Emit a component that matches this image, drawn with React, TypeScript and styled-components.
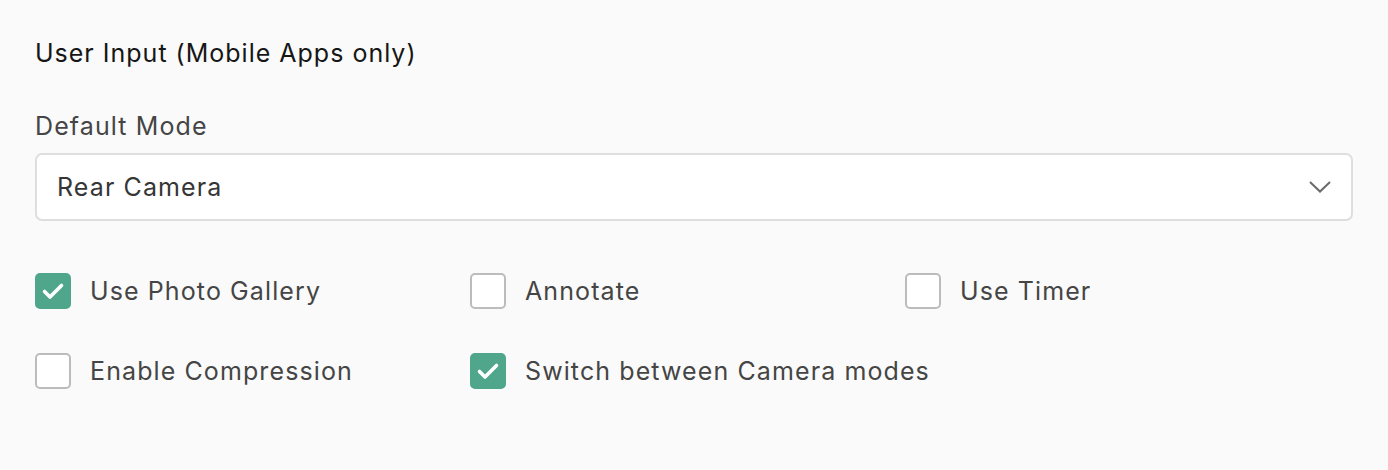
import React, { useState } from "react";
import styled, { createGlobalStyle } from "styled-components";

const GlobalStyle = createGlobalStyle`
  html, body {
    margin: 0;
    padding: 0;
    background: #fafafa;
  }
  body {
    font-family: Inter, "Noto Sans", "Liberation Sans", sans-serif;
    font-size: 25px;
    letter-spacing: 1.1px;
  }
`;

const Panel = styled.div`
  padding: 37px 35px 0 35px;
  display: flex;
  flex-direction: column;
  width: 1318px;
`;

const Title = styled.h2`
  margin: 0;
  font-size: 25px;
  font-weight: 400;
  line-height: 32px;
  letter-spacing: 1px;
  color: #161616;
`;

const FieldLabel = styled.label`
  margin-top: 41px;
  line-height: 32px;
  color: #454545;
`;

const SelectBox = styled.div`
  margin-top: 11px;
  height: 64px;
  border: 2px solid #dedede;
  border-radius: 7px;
  background: #ffffff;
  display: flex;
  align-items: center;
  justify-content: space-between;
  padding: 0 20px 0 20px;
  color: #363636;
  cursor: pointer;
`;

const Options = styled.div`
  margin-top: 52px;
  display: grid;
  grid-template-columns: 435px 435px 435px;
  row-gap: 44px;
`;

const Option = styled.label`
  display: flex;
  align-items: center;
  gap: 19px;
  height: 36px;
  color: #454545;
  white-space: nowrap;
  cursor: pointer;
`;

const Box = styled.span<{ $checked: boolean }>`
  width: 36px;
  height: 36px;
  box-sizing: border-box;
  border-radius: 5px;
  border: 2px solid ${(p) => (p.$checked ? "#4fa68a" : "#bcbcbc")};
  background: ${(p) => (p.$checked ? "#4fa68a" : "#ffffff")};
  display: flex;
  align-items: center;
  justify-content: center;
  flex-shrink: 0;
`;

const options = [
  { label: "Use Photo Gallery", checked: true },
  { label: "Annotate", checked: false },
  { label: "Use Timer", checked: false },
  { label: "Enable Compression", checked: false },
  { label: "Switch between Camera modes", checked: true },
];

const Chevron = () => (
  <svg width="22" height="12" viewBox="0 0 22 12">
    <path d="M1 1 L11 10.5 L21 1" fill="none" stroke="#6a6a6a" strokeWidth="2" />
  </svg>
);

const Check = () => (
  <svg width="32" height="32" viewBox="0 0 32 32">
    <path
      d="M7.5 16.5 L13 22 L24.5 10.5"
      fill="none"
      stroke="#ffffff"
      strokeWidth="3.6"
      strokeLinecap="round"
      strokeLinejoin="round"
    />
  </svg>
);

export default function App() {
  const [state, setState] = useState(options.map((o) => o.checked));

  return (
    <>
      <GlobalStyle />
      <Panel>
        <Title>User Input (Mobile Apps only)</Title>
        <FieldLabel>Default Mode</FieldLabel>
        <SelectBox>
          <span>Rear Camera</span>
          <Chevron />
        </SelectBox>
        <Options>
          {options.map((o, i) => (
            <Option
              key={o.label}
              onClick={() =>
                setState((s) => s.map((v, j) => (j === i ? !v : v)))
              }
            >
              <Box $checked={state[i]}>{state[i] && <Check />}</Box>
              {o.label}
            </Option>
          ))}
        </Options>
      </Panel>
    </>
  );
}
